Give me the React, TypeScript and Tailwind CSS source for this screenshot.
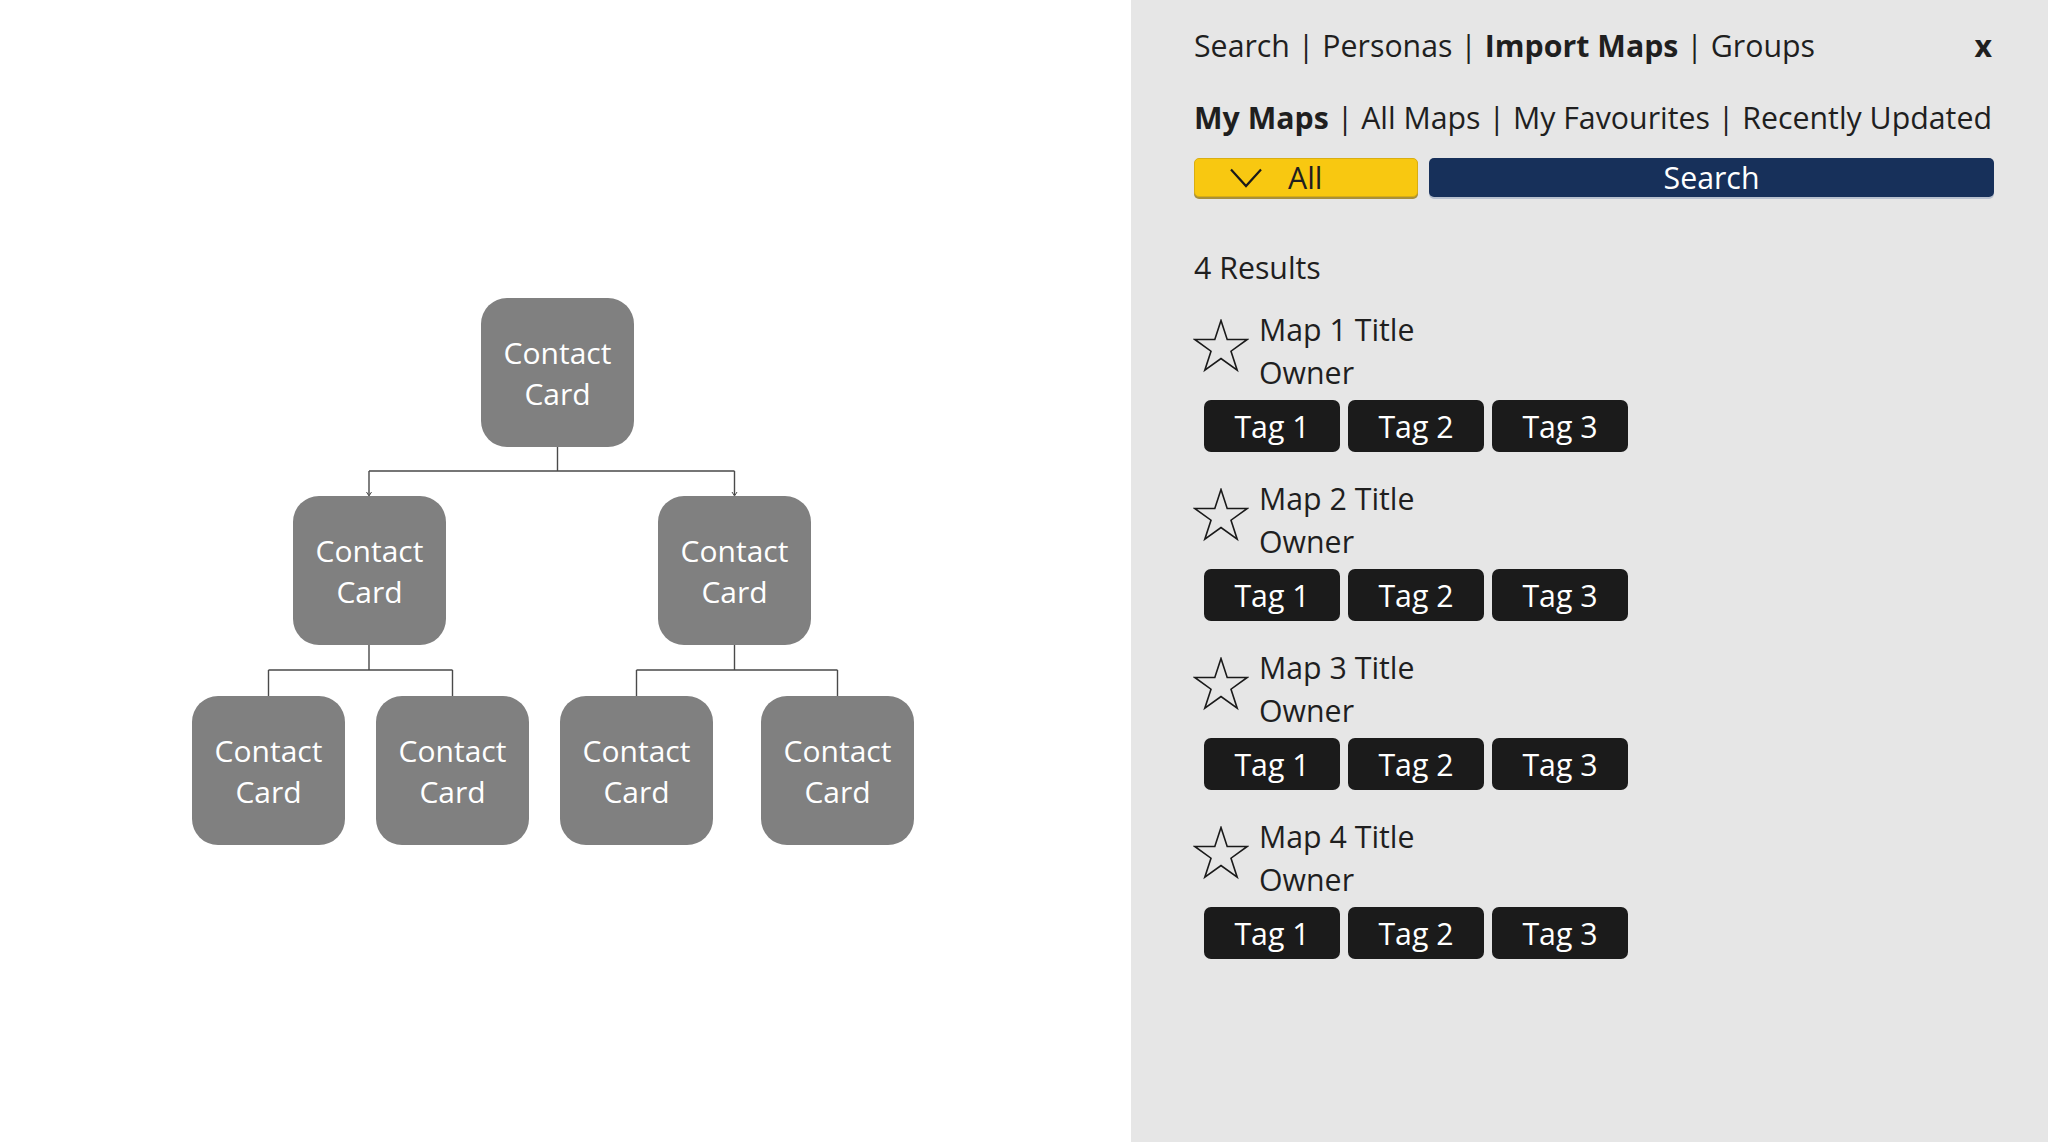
import * as React from 'react';

const font = { fontFamily: '"Open Sans", "Noto Sans", sans-serif' };

function ContactCard({ className }: { className: string }) {
    return (
        <div
            className={`absolute w-[153px] h-[149px] rounded-[26px] bg-[#808080] text-white text-[30px] leading-[41px] flex items-center justify-center text-center ${className}`}
        >
            Contact
            <br />
            Card
        </div>
    );
}

function OrgChart() {
    return (
        <div className="relative w-[1131px] h-full bg-white shrink-0">
            <svg className="absolute left-0 top-0" width="1131" height="1142" fill="none" stroke="#4a4a4a" strokeWidth="1.4">
                <path d="M557.5 447V471M369 471H734.5M369 471V495M734.5 471V495" />
                <path d="M369 645V670M268.5 670H452.5M268.5 670V696M452.5 670V696" />
                <path d="M734.5 645V670M636.5 670H837.5M636.5 670V696M837.5 670V696" />
                <path d="M366.5 492L369 496L371.5 492M732 492L734.5 496L737 492" strokeWidth="1" />
            </svg>
            <ContactCard className="left-[481px] top-[298px]" />
            <ContactCard className="left-[293px] top-[496px]" />
            <ContactCard className="left-[658px] top-[496px]" />
            <ContactCard className="left-[192px] top-[696px]" />
            <ContactCard className="left-[376px] top-[696px]" />
            <ContactCard className="left-[560px] top-[696px]" />
            <ContactCard className="left-[761px] top-[696px]" />
        </div>
    );
}

function Star() {
    return (
        <svg width="56" height="56" viewBox="0 0 56 56" fill="none" stroke="#1a1a1a" strokeWidth="1.6" strokeLinejoin="miter">
            <polygon points="28,1.5 34.2,20.5 54.2,20.5 38,32.2 44.2,51.2 28,39.5 11.8,51.2 18,32.2 1.8,20.5 21.8,20.5" />
        </svg>
    );
}

function MapResult({ n }: { n: number }) {
    return (
        <div className={n === 1 ? 'mt-[19px]' : 'mt-[25px]'}>
            <div className="flex">
                <div className="w-[67px] shrink-0 pt-[11px] -ml-[1px]">
                    <Star />
                </div>
                <div className="leading-[43px] -ml-[1px]">
                    <div>Map {n} Title</div>
                    <div>Owner</div>
                </div>
            </div>
            <div className="flex gap-2 ml-[10px] mt-[6px]">
                {['Tag 1', 'Tag 2', 'Tag 3'].map((t) => (
                    <div
                        key={t}
                        className="w-[136px] h-[52px] rounded-[7px] bg-[#1b1b1b] text-white flex items-center justify-center"
                    >
                        {t}
                    </div>
                ))}
            </div>
        </div>
    );
}

function ImportPanel() {
    return (
        <div className="flex-1 h-full bg-[#e6e6e6] pl-[63px] pr-[54px] pt-[24px] text-[30.3px] leading-[43px] text-[#1f1f1f]">
            <div className="flex justify-between">
                <div className="whitespace-pre">
                    Search | Personas | <span className="font-bold">Import Maps</span> | Groups
                </div>
                <div className="font-bold pr-[2px]">x</div>
            </div>
            <div className="mt-[29px] whitespace-pre">
                <span className="font-bold">My Maps</span> | All Maps | My Favourites | Recently Updated
            </div>
            <div className="flex gap-[11px] mt-[19px] h-[39px]">
                <div className="w-[224px] rounded-[5px] bg-[#f8c811] border border-[#d9ae12] shadow-[0_2px_0_#a8903c] flex items-center pl-[35px]">
                    <svg width="32" height="20" viewBox="0 0 32 20" fill="none" stroke="#1a1a1a" strokeWidth="2.2">
                        <path d="M1 1.5L16 18L31 1.5" />
                    </svg>
                    <span className="ml-[26px]">All</span>
                </div>
                <div className="flex-1 rounded-[5px] bg-[#17305a] shadow-[0_2px_0_#b9c1cf] text-white flex items-center justify-center">
                    Search
                </div>
            </div>
            <div className="mt-[49px]">4 Results</div>
            <div>
                {[1, 2, 3, 4].map((n) => (
                    <MapResult key={n} n={n} />
                ))}
            </div>
        </div>
    );
}

export default function App() {
    return (
        <div className="flex w-[2048px] h-[1142px] overflow-hidden" style={font}>
            <OrgChart />
            <ImportPanel />
        </div>
    );
}
